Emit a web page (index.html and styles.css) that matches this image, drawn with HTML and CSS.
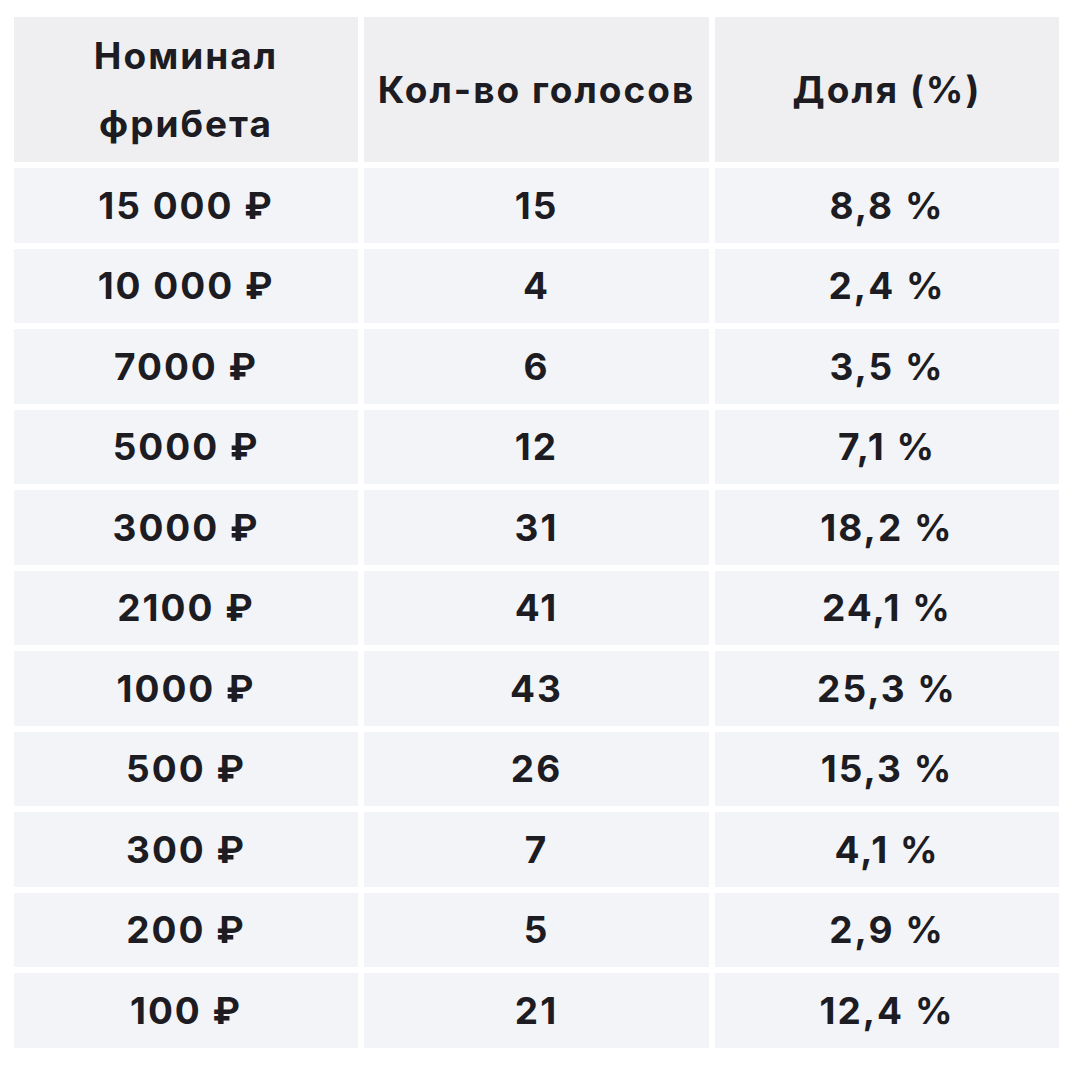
FILE: index.html
```html
<!DOCTYPE html>
<html lang="ru">
<head>
<meta charset="utf-8">
<link rel="stylesheet" href="styles.css">
</head>
<body>
<div class="page">
  <div class="table">
    <div class="cell head">Номинал<br>фрибета</div>
    <div class="cell head">Кол-во голосов</div>
    <div class="cell head">Доля (%)</div>

    <div class="cell">15 000 ₽</div><div class="cell">15</div><div class="cell">8,8 %</div>
    <div class="cell">10 000 ₽</div><div class="cell">4</div><div class="cell">2,4 %</div>
    <div class="cell">7000 ₽</div><div class="cell">6</div><div class="cell">3,5 %</div>
    <div class="cell">5000 ₽</div><div class="cell">12</div><div class="cell">7,1 %</div>
    <div class="cell">3000 ₽</div><div class="cell">31</div><div class="cell">18,2 %</div>
    <div class="cell">2100 ₽</div><div class="cell">41</div><div class="cell">24,1 %</div>
    <div class="cell">1000 ₽</div><div class="cell">43</div><div class="cell">25,3 %</div>
    <div class="cell">500 ₽</div><div class="cell">26</div><div class="cell">15,3 %</div>
    <div class="cell">300 ₽</div><div class="cell">7</div><div class="cell">4,1 %</div>
    <div class="cell">200 ₽</div><div class="cell">5</div><div class="cell">2,9 %</div>
    <div class="cell">100 ₽</div><div class="cell">21</div><div class="cell">12,4 %</div>
  </div>
</div>
</body>
</html>
```
FILE: styles.css
```css
html, body {
  margin: 0;
  padding: 0;
  background: #ffffff;
}
.page {
  padding: 17px 21px 0 14px;
}
.table {
  display: grid;
  grid-template-columns: 344px 345px 344px;
  grid-template-rows: 145px repeat(11, 74.5px);
  gap: 6px;
  font-family: Inter, "Noto Sans", sans-serif;
  font-weight: 700;
  font-size: 37px;
  letter-spacing: 2px;
  color: #1c1c22;
}
.cell {
  background: #f3f4f8;
  display: flex;
  align-items: center;
  justify-content: center;
  text-align: center;
  line-height: 1;
}
.head {
  background: #efeff1;
  line-height: 68px;
}
```
